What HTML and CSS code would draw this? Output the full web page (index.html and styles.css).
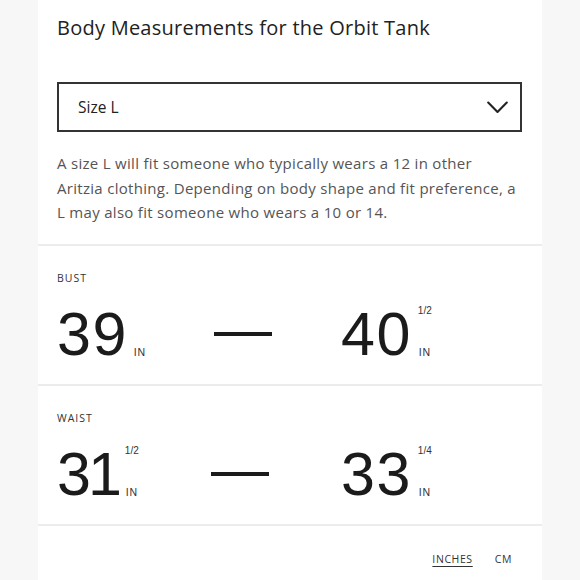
FILE: index.html
```html
<!DOCTYPE html>
<html lang="en">
<head>
<meta charset="utf-8">
<title>Body Measurements</title>
<link rel="stylesheet" href="styles.css">
</head>
<body>
<main class="panel">
  <header class="head">
    <h1 class="title">Body Measurements for the Orbit Tank</h1>
    <div class="select">
      <span class="select-text">Size L</span>
      <svg class="chevron" width="21" height="13" viewBox="0 0 21 13" aria-hidden="true">
        <path d="M1.2 1.6 L10.5 10.9 L19.8 1.6" fill="none" stroke="#222" stroke-width="2.1" stroke-linecap="round" stroke-linejoin="round"/>
      </svg>
    </div>
    <p class="desc">A size L will fit someone who typically wears a 12 in other<br>Aritzia clothing. Depending on body shape and fit preference, a<br>L may also fit someone who wears a 10 or 14.</p>
  </header>

  <section class="measure">
    <div class="label">BUST</div>
    <div class="row">
      <div class="value">
        <span class="num">39</span>
        <span class="unit"><span class="frac"></span><span class="in">IN</span></span>
      </div>
      <div class="sep"><span class="dash"></span></div>
      <div class="value value-end">
        <span class="num">40</span>
        <span class="unit"><span class="frac">1/2</span><span class="in">IN</span></span>
      </div>
    </div>
  </section>

  <section class="measure">
    <div class="label">WAIST</div>
    <div class="row">
      <div class="value">
        <span class="num num-tight">31</span>
        <span class="unit"><span class="frac">1/2</span><span class="in">IN</span></span>
      </div>
      <div class="sep"><span class="dash"></span></div>
      <div class="value value-end">
        <span class="num">33</span>
        <span class="unit"><span class="frac">1/4</span><span class="in">IN</span></span>
      </div>
    </div>
  </section>

  <footer class="units">
    <span class="unit-link active">INCHES</span>
    <span class="unit-link">CM</span>
  </footer>
</main>
</body>
</html>
```

FILE: styles.css
```css
* { box-sizing: border-box; }

html, body {
  margin: 0;
  padding: 0;
  background: #f7f7f7;
}

body {
  font-family: "Open Sans", "Liberation Sans", sans-serif;
  color: #222;
  height: 580px;
  overflow: hidden;
}

.panel {
  margin-left: 38px;
  width: 504px;
  min-height: 580px;
  background: #fff;
}

.head {
  padding: 14px 20px 19px 19px;
}

.title {
  margin: 0;
  font-size: 20px;
  line-height: 28px;
  letter-spacing: 0.25px;
  font-weight: 400;
  color: #222;
}

.select {
  margin-top: 40px;
  height: 50px;
  border: 2px solid #333;
  display: flex;
  align-items: center;
  justify-content: space-between;
  padding: 0 12px 0 19px;
}

.select-text {
  font-size: 15.5px;
  color: #222;
}

.chevron { display: block; }

.desc {
  margin: 19px 0 0;
  font-size: 15px;
  line-height: 24.5px;
  letter-spacing: 0.3px;
  color: #555;
  white-space: nowrap;
}

.measure {
  border-top: 2px solid #ececec;
  padding: 25px 20px 20px 19px;
}

.label {
  font-size: 10.5px;
  line-height: 14px;
  letter-spacing: 1px;
  color: #333;
}

.row {
  margin-top: 19px;
  display: flex;
  align-items: stretch;
}

.value {
  display: flex;
  align-items: stretch;
  font-family: "Liberation Sans", Arial, sans-serif;
}

.value-end {
  width: 181px;
}

.num {
  font-size: 61px;
  line-height: 60px;
  color: #1b1b1b;
  letter-spacing: 1.5px;
}

.num-tight {
  letter-spacing: -3px;
}

.unit {
  display: flex;
  flex-direction: column;
  justify-content: space-between;
  align-items: center;
  margin-left: 6px;
  padding: 1px 0 6px;
  font-size: 10px;
  line-height: 12px;
  color: #333;
}

.frac { min-height: 12px; }

.in { letter-spacing: 0.8px; font-size: 10.5px; }

.sep {
  flex: 1;
  display: flex;
  align-items: center;
  justify-content: center;
}

.dash {
  width: 58px;
  height: 4px;
  background: #1b1b1b;
}

.units {
  border-top: 2px solid #ececec;
  display: flex;
  justify-content: flex-end;
  gap: 22px;
  padding: 26px 30px 0 19px;
}

.unit-link {
  font-size: 10.5px;
  line-height: 14px;
  letter-spacing: 0.6px;
  color: #333;
}

.unit-link.active {
  text-decoration: underline;
  text-underline-offset: 3px;
}
```
